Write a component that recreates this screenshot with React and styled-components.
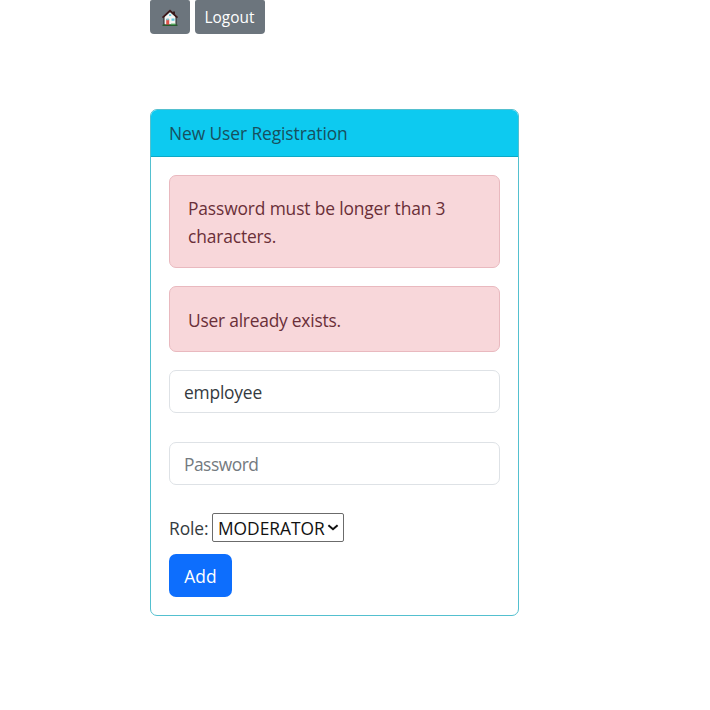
import React from "react";
import styled, { createGlobalStyle } from "styled-components";

const GlobalStyle = createGlobalStyle`
  *, *::before, *::after { box-sizing: border-box; }
  body {
    margin: 0;
    background: #fff;
    color: #343a40;
    font-family: "Open Sans", "Noto Sans", sans-serif;
    font-size: 17.4px;
    line-height: 28px;
  }
`;

const Page = styled.main`
  width: 369px;
  margin-left: 150px;
`;

const Toolbar = styled.nav`
  display: flex;
  gap: 5px;
  height: 34px;
`;

const NavButton = styled.button`
  display: flex;
  align-items: center;
  justify-content: center;
  width: ${({ $width }) => $width}px;
  height: 34px;
  padding: 1px 1px 0 0;
  border: 0;
  border-radius: 2px 2px 4px 4px;
  background: #6c757d;
  color: #fff;
  font: 15.4px "Open Sans", sans-serif;
`;

const Card = styled.section`
  margin-top: 75px;
  height: 507px;
  border: 1px solid #54c0cf;
  border-radius: 7px;
  overflow: hidden;
`;

const CardHeader = styled.header`
  height: 47px;
  padding: 9px 18px 0;
  border-bottom: 1px solid #0ca9c6;
  background: #0dcaf0;
  color: #17505e;
  letter-spacing: ${({ $tracking }) => $tracking}px;
`;

const CardBody = styled.form`
  display: flex;
  flex-direction: column;
  align-items: stretch;
  padding: 18px;
`;

const Alert = styled.div`
  height: ${({ $height }) => $height}px;
  margin-bottom: 18px;
  padding: ${({ $top }) => $top}px 18px 0;
  border: 1px solid #e9b9bf;
  border-radius: 7px;
  background: #f8d7da;
  color: #6a2f38;
  letter-spacing: ${({ $tracking }) => $tracking}px;
`;

const Input = styled.input`
  width: 100%;
  height: 43px;
  margin: 0 0 ${({ $gap }) => $gap}px;
  padding: 1px 14px 0;
  border: 1px solid #dee2e6;
  border-radius: 7px;
  background: #fff;
  color: #343a40;
  font: inherit;
  letter-spacing: ${({ $tracking }) => $tracking}px;
  outline: 0;
  &::placeholder { color: #747a80; opacity: 1; }
`;

const RoleRow = styled.div`
  display: flex;
  align-items: center;
  height: 29px;
  margin-bottom: 12px;
`;

const RoleLabel = styled.label`
  width: 43px;
  padding-top: 1px;
  white-space: nowrap;
  letter-spacing: ${({ $tracking }) => $tracking}px;
`;

const SelectBox = styled.div`
  display: flex;
  align-items: center;
  width: 132px;
  height: 29px;
  padding-left: 5px;
  border: 1px solid #6b6b6b;
  border-radius: 2px;
`;

const Select = styled.select`
  appearance: none;
  width: 109px;
  height: 27px;
  padding: 0 0 1px;
  border: 0;
  background: transparent;
  color: #111;
  font: inherit;
  letter-spacing: ${({ $tracking }) => $tracking}px;
  outline: 0;
`;

const AddButton = styled.button`
  width: 63px;
  height: 43px;
  padding: 1px 0 0;
  border: 0;
  border-radius: 7px;
  background: #0d6efd;
  color: #fff;
  font: inherit;
  letter-spacing: ${({ $tracking }) => $tracking}px;
`;

const HouseIcon = () => (
  <svg width="18" height="18" viewBox="0 0 18 18" aria-hidden="true">
    <path d="M3 8 9 2.5 15 8v8H3z" fill="#f4f5f3" stroke="#252322" strokeWidth="1" />
    <path d="M12 2.5h2V6l-2-1.5z" fill="#35201f" />
    <path d="M1.5 8.7 9 1.7l7.5 7" fill="none" stroke="#3d1719" strokeWidth="1.6" />
    <path d="M8 5.2h2.2V7H8zM10.5 9.4h3v2.4h-3z" fill="#62c8dc" />
    <path d="M5.2 10h3V16h-3z" fill="#dc5149" />
    <path d="M5.4 9.5h2.5v1.7H5.4z" fill="#76c9d6" />
    <path d="M1.5 16.3h15" stroke="#285b2e" strokeWidth="1.4" />
    <path d="M10 15.2h4.5" stroke="#49ad57" strokeWidth="1.2" />
  </svg>
);

const Chevron = () => (
  <svg width="12" height="8" viewBox="0 0 12 8" aria-hidden="true">
    <path d="m1.4 1.2 4.6 4 4.6-4" fill="none" stroke="#111" strokeWidth="2" />
  </svg>
);

export default function App() {
  return (
    <>
      <GlobalStyle />
      <Page>
        <Toolbar>
          <NavButton $width={40} aria-label="Home"><HouseIcon /></NavButton>
          <NavButton $width={70}>Logout</NavButton>
        </Toolbar>
        <Card>
          <CardHeader $tracking={-0.09}>New User Registration</CardHeader>
          <CardBody onSubmit={(event) => event.preventDefault()}>
            <Alert $height={93} $top={18} $tracking={-0.14}>Password must be longer than 3 characters.</Alert>
            <Alert $height={66} $top={19} $tracking={-0.23}>User already exists.</Alert>
            <Input $gap={29} $tracking={-0.2} defaultValue="employee" aria-label="Username" />
            <Input $gap={28} $tracking={-0.5} type="password" placeholder="Password" />
            <RoleRow>
              <RoleLabel htmlFor="role" $tracking={-0.1}>Role:</RoleLabel>
              <SelectBox>
                <Select id="role" $tracking={-0.05} defaultValue="MODERATOR">
                  <option>MODERATOR</option>
                </Select>
                <Chevron />
              </SelectBox>
            </RoleRow>
            <AddButton $tracking={0}>Add</AddButton>
          </CardBody>
        </Card>
      </Page>
    </>
  );
}
